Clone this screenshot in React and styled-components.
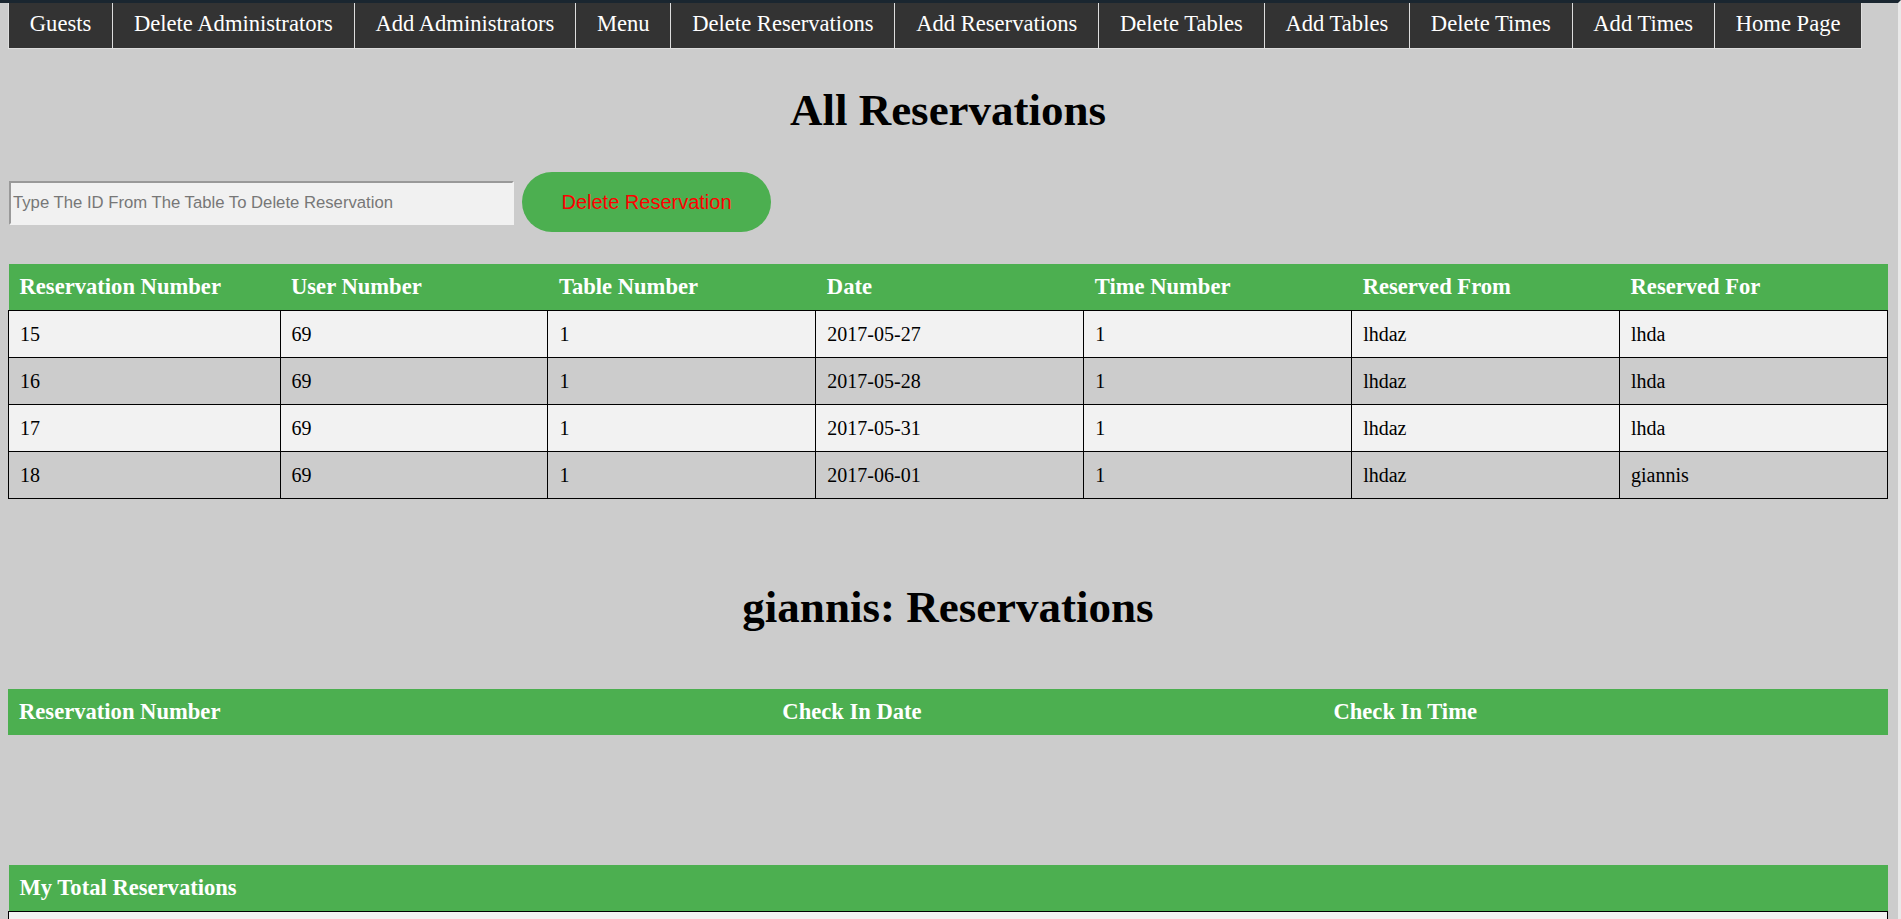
import React from 'react';
import styled, { createGlobalStyle } from 'styled-components';

const GlobalStyle = createGlobalStyle`
  html, body {
    margin: 0;
    padding: 0;
    overflow: hidden;
    background-color: #cccccc;
  }
  body {
    font-family: "Liberation Serif", "Times New Roman", serif;
    color: #000;
  }
`;

const Page = styled.div`
  min-height: 100vh;
  box-sizing: border-box;
  border-top: 3px solid #1a2630;
  border-right: 3px solid #e9e9e9;
  padding: 0 10px 0 8px;
`;

const NavBar = styled.ul`
  display: flex;
  list-style: none;
  margin: 0;
  padding: 0;
`;

const NavItem = styled.li`
  display: block;
  flex-shrink: 0;

  &:first-child a {
    border-left: 1px solid #dddddd;
  }
`;

const NavLink = styled.a`
  display: block;
  white-space: nowrap;
  background-color: #333333;
  color: #ffffff;
  font-size: 22.6px;
  line-height: 25px;
  padding: 8px 20.8px 12px;
  border-right: 1px solid #dddddd;
  border-bottom: 1px solid #dddddd;
  text-decoration: none;
  cursor: pointer;
`;

const Title = styled.h1`
  font-size: 45px;
  font-weight: bold;
  text-align: center;
  line-height: 52px;
  margin: ${(p) => p.$margin || '35px 0 36px'};
`;

const DeleteRow = styled.form`
  display: flex;
  align-items: center;
  gap: 8px;
  margin-bottom: 32px;
`;

const IdInput = styled.input`
  width: 505px;
  height: 44px;
  box-sizing: border-box;
  margin: 2px 0 0 1px;
  padding: 0 2px;
  background-color: #f1f1f1;
  border-style: solid;
  border-width: 2px;
  border-color: #999999 #f1f1f1 #f1f1f1 #999999;
  font-family: "Liberation Sans", Arial, sans-serif;
  font-size: 16.7px;

  &::placeholder {
    color: #777777;
  }
`;

const DeleteButton = styled.button`
  width: 249px;
  height: 60px;
  border: none;
  border-radius: 30px;
  background-color: #4caf50;
  color: #ff0000;
  font-family: "Liberation Sans", Arial, sans-serif;
  font-size: 20px;
  cursor: pointer;
`;

const Table = styled.table`
  width: 100%;
  border-collapse: collapse;
  table-layout: ${(p) => (p.$fixed ? 'fixed' : 'auto')};
  margin-bottom: ${(p) => p.$gap || '0'};
`;

const Col = styled.col`
  width: ${(p) => p.$width || 'auto'};
`;

const Th = styled.th`
  background-color: #4caf50;
  color: #ffffff;
  text-align: left;
  font-size: 22.6px;
  font-weight: bold;
  line-height: 26px;
  padding: 10px 11px;
`;

const Row = styled.tr`
  background-color: ${(p) => (p.$odd ? '#f2f2f2' : '#cccccc')};
`;

const Td = styled.td`
  border: 1px solid #000000;
  font-size: 20px;
  line-height: 23px;
  padding: 11.5px 11px;
`;

const navLinks = [
  'Guests',
  'Delete Administrators',
  'Add Administrators',
  'Menu',
  'Delete Reservations',
  'Add Reservations',
  'Delete Tables',
  'Add Tables',
  'Delete Times',
  'Add Times',
  'Home Page',
];

const columns = [
  'Reservation Number',
  'User Number',
  'Table Number',
  'Date',
  'Time Number',
  'Reserved From',
  'Reserved For',
];

const reservations = [
  [15, 69, 1, '2017-05-27', 1, 'lhdaz', 'lhda'],
  [16, 69, 1, '2017-05-28', 1, 'lhdaz', 'lhda'],
  [17, 69, 1, '2017-05-31', 1, 'lhdaz', 'lhda'],
  [18, 69, 1, '2017-06-01', 1, 'lhdaz', 'giannis'],
];

const App = () => {
  return (
    <>
      <GlobalStyle />
      <Page>
        <NavBar>
          {navLinks.map((label) => (
            <NavItem key={label}>
              <NavLink>{label}</NavLink>
            </NavItem>
          ))}
        </NavBar>

        <Title>All Reservations</Title>

        <DeleteRow onSubmit={(e) => e.preventDefault()}>
          <IdInput type="text" placeholder="Type The ID From The Table To Delete Reservation" />
          <DeleteButton type="submit">Delete Reservation</DeleteButton>
        </DeleteRow>

        <Table $fixed>
          <colgroup>
            <Col $width="14.45%" />
            {columns.slice(1).map((c) => (
              <Col key={c} />
            ))}
          </colgroup>
          <thead>
            <tr>
              {columns.map((c) => (
                <Th key={c}>{c}</Th>
              ))}
            </tr>
          </thead>
          <tbody>
            {reservations.map((r, i) => (
              <Row key={r[0]} $odd={i % 2 === 0}>
                {r.map((v, j) => (
                  <Td key={j}>{v}</Td>
                ))}
              </Row>
            ))}
          </tbody>
        </Table>

        <Title $margin="82px 0 56px">giannis: Reservations</Title>

        <Table $gap="130px">
          <thead>
            <tr>
              <Th>Reservation Number</Th>
              <Th>Check In Date</Th>
              <Th>Check In Time</Th>
            </tr>
          </thead>
        </Table>

        <Table>
          <thead>
            <tr>
              <Th>My Total Reservations</Th>
            </tr>
          </thead>
          <tbody>
            <Row $odd>
              <Td>{'\u00a0'}</Td>
            </Row>
          </tbody>
        </Table>
      </Page>
    </>
  );
};

export default App;
